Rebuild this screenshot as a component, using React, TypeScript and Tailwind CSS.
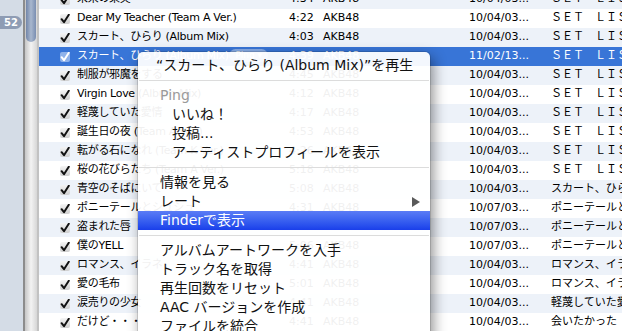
import React from "react";

type Row = { name: string; time: string; date: string; album: string; selected?: boolean };

const SET = "ＳＥＴ　ＬＩＳＴ";
const PONY = "ポニーテールとシュシュ";
const ROMANCE = "ロマンス、イラネ";

const rows: Row[] = [
  { name: "未来の果実", time: "4:34", date: "10/04/03...", album: SET },
  { name: "Dear My Teacher (Team A Ver.)", time: "4:22", date: "10/04/03...", album: SET },
  { name: "スカート、ひらり (Album Mix)", time: "4:03", date: "10/04/03...", album: SET },
  { name: "スカート、ひらり (Album Mix)", time: "4:39", date: "11/02/13...", album: SET, selected: true },
  { name: "制服が邪魔をする", time: "4:45", date: "10/04/03...", album: SET },
  { name: "Virgin Love (Album Mix)", time: "4:12", date: "10/04/03...", album: SET },
  { name: "軽蔑していた愛情", time: "4:17", date: "10/04/03...", album: SET },
  { name: "誕生日の夜 (Team A Ver.)", time: "4:53", date: "10/04/03...", album: SET },
  { name: "転がる石になれ (Team K Ver.)", time: "4:26", date: "10/04/03...", album: SET },
  { name: "桜の花びらたち (Team A Ver.)", time: "5:18", date: "10/04/03...", album: SET },
  { name: "青空のそばにいて", time: "5:08", date: "10/04/03...", album: "スカート、ひらり" },
  { name: "ポニーテールとシュシュ", time: "4:31", date: "10/07/03...", album: PONY },
  { name: "盗まれた唇", time: "4:54", date: "10/07/03...", album: PONY },
  { name: "僕のYELL", time: "5:06", date: "10/07/03...", album: PONY },
  { name: "ロマンス、イラネ", time: "4:41", date: "10/04/03...", album: ROMANCE },
  { name: "愛の毛布", time: "5:01", date: "10/04/03...", album: ROMANCE },
  { name: "涙売りの少女", time: "4:41", date: "10/04/03...", album: "軽蔑していた愛情" },
  { name: "だけど・・・", time: "4:41", date: "10/04/03...", album: "会いたかった" },
];

function Check({ selected }: { selected?: boolean }) {
  return (
    <div
      className={
        selected
          ? "w-[10px] h-[10px] rounded-[2px] bg-[#8fb2ea] flex items-center justify-center"
          : "w-[10px] h-[10px] rounded-[2px] bg-gradient-to-b from-[#f4f4f4] to-[#cfcfcf] flex items-center justify-center"
      }
    >
      <svg width="10" height="10" viewBox="0 0 10 10">
        <path
          d="M1.6 5.2 L4 8.2 L8.8 0.8"
          fill="none"
          stroke={selected ? "#ffffff" : "#111111"}
          strokeWidth="2"
          strokeLinecap="round"
          strokeLinejoin="round"
        />
      </svg>
    </div>
  );
}

function Sep() {
  return (
    <div className="h-[11px] flex items-center px-[1px]">
      <div className="h-px w-full bg-[#dcdcdc]" />
    </div>
  );
}

function Item({ label, indent, gray, arrow, active }: { label: string; indent?: boolean; gray?: boolean; arrow?: boolean; active?: boolean }) {
  return (
    <div
      className={
        "h-[19px] flex items-center justify-between pr-[10px] " +
        (indent ? "pl-[34px] " : "pl-[22px] ") +
        (active ? "bg-gradient-to-b from-[#5b7cf5] to-[#1a3eea] text-white " : gray ? "text-[#9a9a9a] " : "text-[#111] ")
      }
    >
      <span>{label}</span>
      {arrow && (
        <svg width="8" height="10" viewBox="0 0 8 10">
          <path d="M0 0 L8 5 L0 10 Z" fill="#5a5a5a" />
        </svg>
      )}
    </div>
  );
}

export default function App() {
  return (
    <div className="relative w-[622px] h-[331px] overflow-hidden flex bg-white font-['DejaVu_Sans','Noto_Sans_CJK_JP',sans-serif]">
      {/* source list edge */}
      <div className="w-[23px] h-full bg-[#d4dce6] overflow-hidden pt-[16px]">
        <div className="-ml-[9px] w-[31px] h-[13px] rounded-full bg-[#8e9cb4] text-white text-[10px] font-bold leading-[13px] text-right pr-[4px]">
          52
        </div>
      </div>
      <div className="w-[2px] h-full bg-[#8c8c8c]" />
      <div className="w-[12px] h-full bg-gradient-to-r from-[#c6c6c6] via-[#f3f3f3] to-[#d6d6d6] flex justify-center">
        <div className="w-[10px] h-[42px] rounded-b-full bg-gradient-to-r from-[#7286a9] via-[#a8b7ce] to-[#7a8eb1]" />
      </div>
      <div className="w-[2px] h-full bg-[#c2c2c2]" />

      {/* track list */}
      <div className="flex-1 h-full overflow-hidden text-[11px]">
        <div className="-mt-[10px]">
          {rows.map((r, i) => (
            <div
              key={i}
              className={
                "h-[19px] flex items-center whitespace-nowrap " +
                (r.selected ? "bg-[#3875d7] text-white" : i % 2 === 0 ? "bg-[#edf2f9] text-black" : "bg-white text-black")
              }
            >
              <div className="w-[21px] shrink-0" />
              <Check selected={r.selected} />
              <div className="w-[7px] shrink-0" />
              <div className="relative w-[212px] shrink-0 overflow-hidden tracking-[-0.3px]">
                {r.name}
                {r.selected && (
                  <span className="absolute right-[21px] top-[1px] h-[13px] px-[6px] rounded-full bg-white/40 text-[9px] leading-[13px] text-white tracking-normal">
                    Ping ▾
                  </span>
                )}
              </div>
              <div className="w-[34px] shrink-0">{r.time}</div>
              <div className="w-[146px] shrink-0">AKB48</div>
              <div className="w-[82px] shrink-0">{r.date}</div>
              <div className="shrink-0">{r.album}</div>
            </div>
          ))}
        </div>
      </div>

      {/* context menu */}
      <div className="absolute left-[138px] top-[52px] w-[292px] h-[300px] rounded-t-[5px] bg-white/[0.94] pt-[4px] text-[14px] leading-[19px] shadow-[0_0_0_1px_rgba(0,0,0,0.12),3px_5px_14px_rgba(0,0,0,0.45)]">
        <div className="h-[19px] pl-[18px] text-[#111]">“スカート、ひらり (Album Mix)”を再生</div>
        <Sep />
        <Item label="Ping" gray />
        <Item label="いいね！" indent />
        <Item label="投稿..." indent />
        <Item label="アーティストプロフィールを表示" indent />
        <Sep />
        <Item label="情報を見る" />
        <Item label="レート" arrow />
        <Item label="Finderで表示" active />
        <Sep />
        <Item label="アルバムアートワークを入手" />
        <Item label="トラック名を取得" />
        <Item label="再生回数をリセット" />
        <Item label="AAC バージョンを作成" />
        <Item label="ファイルを統合" />
      </div>
    </div>
  );
}
